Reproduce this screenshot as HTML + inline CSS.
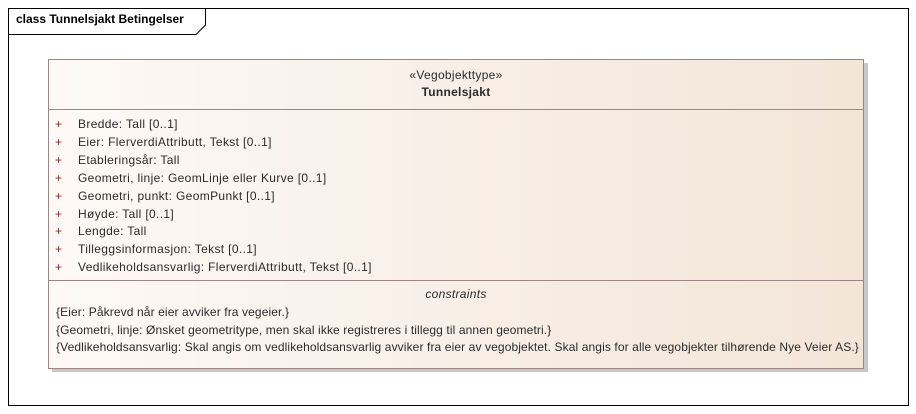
<!DOCTYPE html>
<html><head><meta charset="utf-8"><style>
*{margin:0;padding:0;box-sizing:border-box}
body{width:916px;height:414px;background:#fff;position:relative;overflow:hidden;font-family:"Liberation Sans",sans-serif;font-size:12px;color:#2b2b2b;letter-spacing:0.3px}
.frame{position:absolute;left:8px;top:8px;width:901px;height:398px;border:1px solid #000}
.shadow{position:absolute;left:52px;top:63px;width:816px;height:309px;background:#c8c8c8}
.box{position:absolute;left:48px;top:59px;width:816px;height:310px;border:1px solid #9c8585;background:linear-gradient(to right,#fdf9f6,#f3e5d8)}
.t{position:absolute;white-space:nowrap}
.hl{position:absolute;left:0;right:0;height:1px;background:#9c8585}
.p{color:#8b2a2a}
</style></head><body>
<div class="frame"></div>
<svg style="position:absolute;left:8px;top:8px" width="200" height="28"><path d="M0.5 26.5 H188 L197.5 17 V0.5" fill="none" stroke="#000" stroke-width="1"/></svg>
<div class="t" style="left:16px;top:12px;font-weight:bold;font-size:12px;color:#000;letter-spacing:0">class Tunnelsjakt Betingelser</div>
<div class="shadow"></div>
<div class="box">
<div class="t" style="left:0;right:0;top:8px;text-align:center">«Vegobjekttype»</div>
<div class="t" style="left:0;right:0;top:25px;text-align:center;font-weight:bold">Tunnelsjakt</div>
<div class="hl" style="top:49px"></div>
<div class="t" style="left:6px;top:56px;line-height:17.9px"><span class="p">+<br>+<br>+<br>+<br>+<br>+<br>+<br>+<br>+</span></div>
<div class="t" style="left:29px;top:56px;line-height:17.9px;letter-spacing:0.35px">Bredde: Tall [0..1]<br>Eier: FlerverdiAttributt, Tekst [0..1]<br>Etableringsår: Tall<br>Geometri, linje: GeomLinje eller Kurve [0..1]<br>Geometri, punkt: GeomPunkt [0..1]<br>Høyde: Tall [0..1]<br>Lengde: Tall<br>Tilleggsinformasjon: Tekst [0..1]<br>Vedlikeholdsansvarlig: FlerverdiAttributt, Tekst [0..1]</div>
<div class="hl" style="top:220px"></div>
<div class="t" style="left:0;right:0;top:227px;text-align:center;font-style:italic">constraints</div>
<div class="t" style="left:7px;top:244px;line-height:17.5px;letter-spacing:0.11px">{Eier: Påkrevd når eier avviker fra vegeier.}<br>{Geometri, linje: Ønsket geometritype, men skal ikke registreres i tillegg til annen geometri.}<br>{Vedlikeholdsansvarlig: Skal angis om vedlikeholdsansvarlig avviker fra eier av vegobjektet. Skal angis for alle vegobjekter tilhørende Nye Veier AS.}</div>
</div>
</body></html>
